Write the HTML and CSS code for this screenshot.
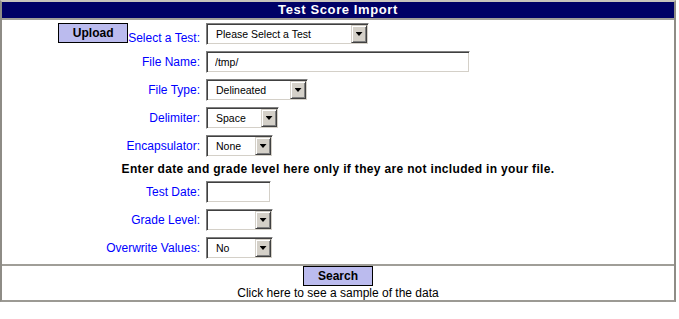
FILE: index.html
```html
<!DOCTYPE html>
<html lang="en">
  <head>
    <meta charset="UTF-8" />
    <title>Test Score Import</title>
    <link rel="stylesheet" href="styles.css">
  </head>
  <body>
    <div class="frame">
      <div class="title">Test Score Import</div>
      <div class="form">
        <div class="label label-upload">
          <button type="button" class="btn">Upload</button>
          <span>Select a Test:</span>
        </div>
        <div class="field">
          <span class="select w-test"><span class="value">Please Select a Test</span><span class="arrow"></span></span>
        </div>

        <div class="label">File Name:</div>
        <div class="field"><input type="text" class="text w-file" value="/tmp/" /></div>

        <div class="label">File Type:</div>
        <div class="field">
          <span class="select w-type"><span class="value">Delineated</span><span class="arrow"></span></span>
        </div>

        <div class="label">Delimiter:</div>
        <div class="field">
          <span class="select w-delim"><span class="value">Space</span><span class="arrow"></span></span>
        </div>

        <div class="label">Encapsulator:</div>
        <div class="field">
          <span class="select w-small"><span class="value">None</span><span class="arrow"></span></span>
        </div>

        <div class="notice">Enter date and grade level here only if they are not included in your file.</div>

        <div class="label">Test Date:</div>
        <div class="field"><input type="text" class="text w-date" value="" /></div>

        <div class="label">Grade Level:</div>
        <div class="field">
          <span class="select w-small"><span class="value"></span><span class="arrow"></span></span>
        </div>

        <div class="label">Overwrite Values:</div>
        <div class="field">
          <span class="select w-small"><span class="value">No</span><span class="arrow"></span></span>
        </div>
      </div>
      <div class="footer">
        <button type="button" class="btn">Search</button>
        <div class="sample">Click here to see a sample of the data</div>
      </div>
    </div>
  </body>
</html>
```

FILE: styles.css
```css
body {
  margin: 0;
  background-color: #fff;
  font-family: "Liberation Sans", Arial, sans-serif;
}
.frame {
  width: 676px;
  box-sizing: border-box;
  border: 2px solid #8e8c86;
  border-top-color: #c8c4bc;
  border-bottom-color: #9c9a94;
}
.title {
  height: 16px;
  line-height: 16px;
  background-color: #000066;
  color: #fff;
  font-size: 13px;
  font-weight: bold;
  letter-spacing: 0.6px;
  text-align: center;
  border-bottom: 2px solid #a09e98;
}
.form {
  display: grid;
  grid-template-columns: 198px 1fr;
  column-gap: 6px;
  row-gap: 6px;
  padding: 3px 0 5px 0;
}
.label {
  display: flex;
  justify-content: flex-end;
  align-items: center;
  color: #0000ff;
  font-size: 12px;
  line-height: 14px;
  white-space: nowrap;
}
.label-upload {
  align-items: flex-end;
}
.label-upload .btn {
  align-self: flex-start;
}
.field {
  display: flex;
  align-items: center;
}
.notice {
  grid-column: 1 / -1;
  text-align: center;
  font-size: 12px;
  line-height: 12px;
  font-weight: bold;
  letter-spacing: 0.33px;
  color: #000;
}
.btn {
  width: 70px;
  height: 20px;
  padding: 0;
  margin: 0;
  background-color: #bbbbee;
  border: 1px solid #000;
  font-family: "Liberation Sans", Arial, sans-serif;
  font-size: 12px;
  font-weight: bold;
  color: #000;
}
.text,
.select {
  box-sizing: border-box;
  height: 22px;
  border: 1px solid;
  border-color: #808080 #fff #fff #808080;
  box-shadow: inset 1px 1px #404040, inset -1px -1px #d4d0c8;
  background-color: #fff;
  font-family: "Liberation Sans", Arial, sans-serif;
  font-size: 10.5px;
  color: #000;
}
.text {
  margin: 0;
  padding: 0 0 0 8px;
  outline: none;
}
.select {
  display: flex;
  padding: 1px;
}
.select .value {
  flex: 1;
  padding-left: 8px;
  line-height: 18px;
  white-space: nowrap;
  overflow: hidden;
}
.select .arrow {
  width: 16px;
  height: 18px;
  box-sizing: border-box;
  display: flex;
  align-items: center;
  justify-content: center;
  background-color: #d4d0c8;
  border: 1px solid;
  border-color: #d4d0c8 #404040 #404040 #d4d0c8;
  box-shadow: inset 1px 1px #fff, inset -1px -1px #808080;
}
.select .arrow::after {
  content: "";
  width: 7px;
  height: 4px;
  background-color: #000;
  clip-path: polygon(0 0, 100% 0, 50% 100%);
}
.w-test {
  width: 163px;
}
.w-file {
  width: 264px;
}
.w-type {
  width: 102px;
}
.w-delim {
  width: 73px;
}
.w-small {
  width: 67px;
}
.w-date {
  width: 65px;
}
.footer {
  border-top: 2px solid #a09e98;
  text-align: center;
}
.footer .btn {
  display: block;
  margin: 0 auto;
}
.sample {
  font-size: 12px;
  line-height: 14px;
  color: #000;
}
```
